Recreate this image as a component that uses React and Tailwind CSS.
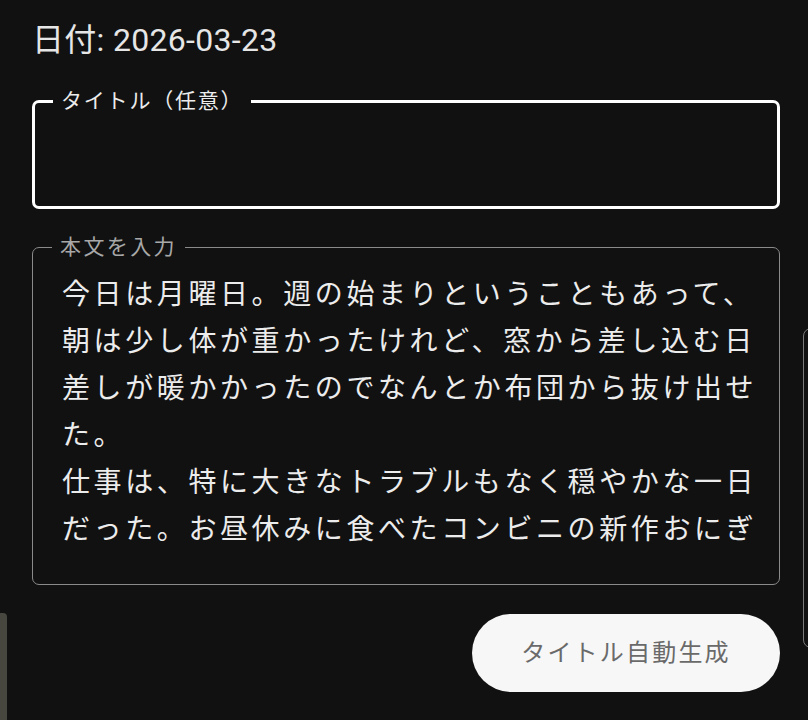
import React from "react";

const lines = [
  "今日は月曜日。週の始まりということもあって、",
  "朝は少し体が重かったけれど、窓から差し込む日",
  "差しが暖かかったのでなんとか布団から抜け出せ",
  "た。",
  "仕事は、特に大きなトラブルもなく穏やかな一日",
  "だった。お昼休みに食べたコンビニの新作おにぎ",
];

export default function App() {
  return (
    <div
      className="relative w-[808px] h-[720px] overflow-hidden bg-[#111111] text-[#e6e6e6]"
      style={{ fontFamily: '"Roboto", "Noto Sans CJK JP", sans-serif' }}
    >
      {/* peeking neighbour cards */}
      <div className="absolute left-[803px] top-[328px] w-[30px] h-[320px] rounded-l-[8px] border-[1.5px] border-[#7a7a7a]" />
      <div className="absolute left-0 top-[613px] w-[7px] h-[120px] rounded-tr-[4px] bg-[#47473f]" />

      <div className="flex flex-col pl-[32px] w-[780px]">
        <div className="pt-[16px] h-[64px] text-[32px] leading-[48px] tracking-[0.3px]">日付: 2026-03-23</div>

        <fieldset className="mt-[23px] h-[122px] rounded-[7px] border-[3px] border-white">
          <legend className="ml-[18px] px-[8px] text-[21px] leading-[28px] tracking-[1.8px] text-[#ececec]">
            タイトル（任意）
          </legend>
        </fieldset>

        <fieldset className="mt-[24px] h-[352px] rounded-[7px] border-[1.5px] border-[#8a8a8a] overflow-hidden">
          <legend className="ml-[19px] px-[8px] text-[21px] leading-[28px] tracking-[2.4px] text-[#a8a8a8]">
            本文を入力
          </legend>
          <div className="pl-[29px] pt-[10px] h-[310px] overflow-hidden text-[28px] leading-[47px] tracking-[3.6px] text-[#ececec]">
            {lines.map((l, i) => (
              <div key={i} className="whitespace-nowrap">
                {l}
              </div>
            ))}
          </div>
        </fieldset>

        <div className="flex justify-end mt-[29px]">
          <button className="w-[308px] h-[78px] rounded-full bg-[#f7f7f7] text-[24px] tracking-[2.2px] text-[#6a6a6a]">
            タイトル自動生成
          </button>
        </div>
      </div>
    </div>
  );
}
